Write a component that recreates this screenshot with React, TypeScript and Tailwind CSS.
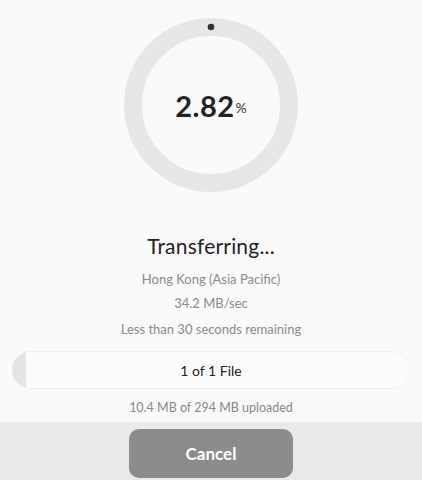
import React from 'react';

const percent = 2.82;

function ProgressRing() {
  return (
    <div className="relative w-[174px] h-[174px]">
      <svg width="174" height="174" viewBox="0 0 174 174">
        <circle cx="87" cy="87" r="78" fill="none" stroke="#e6e6e6" strokeWidth="18" />
        <circle cx="87" cy="9" r="3.3" fill="#333333" />
      </svg>
      <div className="absolute inset-0 flex items-center justify-center">
        <span className="text-[29px] font-bold text-[#222222] leading-none tracking-[0.5px]">2.82</span>
        <span className="text-[14px] text-[#333333] ml-[1px] mt-[4px]">%</span>
      </div>
    </div>
  );
}

export default function App() {
  return (
    <div
      className="w-[422px] h-[480px] bg-[#fafafa] flex flex-col items-center overflow-hidden"
      style={{ fontFamily: 'Lato, "Noto Sans", sans-serif' }}
    >
      <div className="mt-[18px]">
        <ProgressRing />
      </div>

      <div className="mt-[40px] h-[28px] leading-[28px] text-[21px] text-[#222222] tracking-[0.2px]">Transferring...</div>
      <div className="mt-[9px] h-[20px] leading-[20px] text-[13px] text-[#8a8a8a]">Hong Kong (Asia Pacific)</div>
      <div className="mt-[4px] h-[20px] leading-[20px] text-[13px] text-[#8a8a8a]">34.2 MB/sec</div>
      <div className="mt-[6px] h-[20px] leading-[20px] text-[13px] text-[#8a8a8a]">Less than 30 seconds remaining</div>

      {/* file progress bar */}
      <div className="mt-[12px] self-stretch px-[12px]">
        <div className="relative h-[38px] rounded-full overflow-hidden bg-[#fcfcfc] border-y border-[#efefef] flex items-center justify-center">
          <div className="absolute left-0 top-0 bottom-0 bg-[#e3e3e3]" style={{ width: `${Math.max(14, percent * 4)}px` }} />
          <span className="relative text-[14px] text-[#222222]">1 of 1 File</span>
        </div>
      </div>

      <div className="mt-[11px] h-[16px] leading-[16px] text-[12.5px] text-[#888888]">10.4 MB of 294 MB uploaded</div>

      <div className="mt-[6px] self-stretch flex-1 bg-[#e9e9e9] flex justify-center pt-[7px]">
        <button className="w-[164px] h-[49px] rounded-[10px] bg-[#8c8c8c] text-white text-[17px] font-bold">
          Cancel
        </button>
      </div>
    </div>
  );
}
